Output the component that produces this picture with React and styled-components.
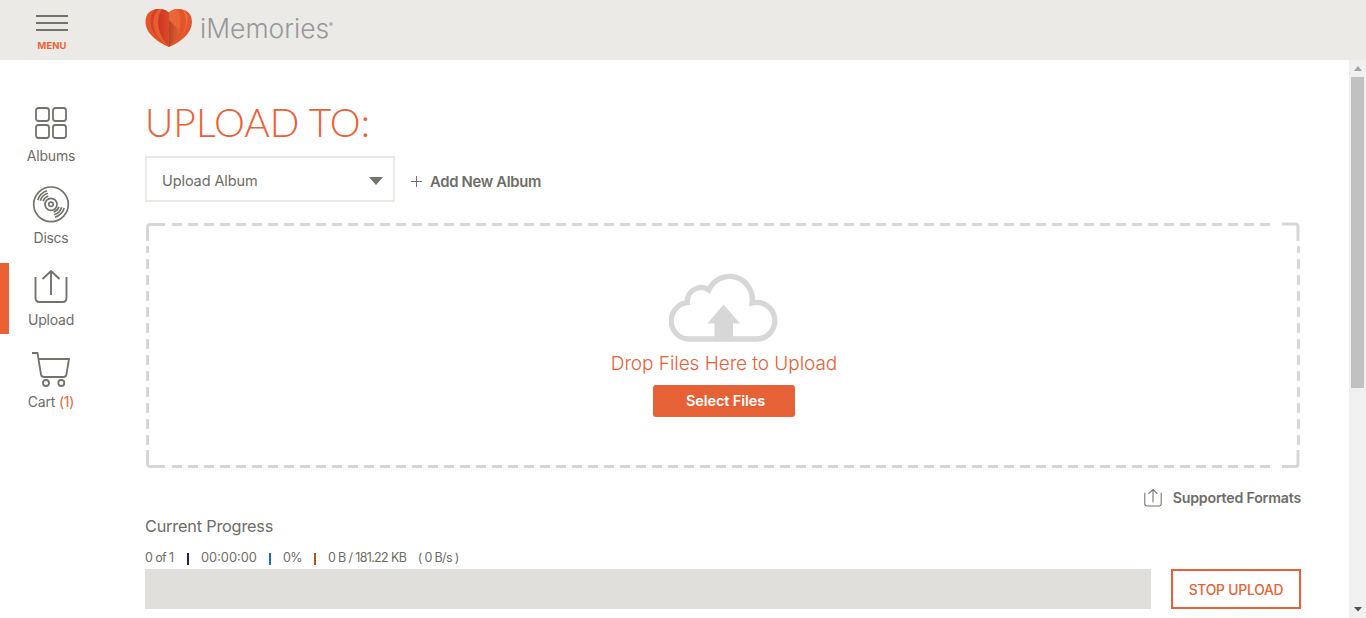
import React from 'react';
import styled, { createGlobalStyle } from 'styled-components';

const Global = createGlobalStyle`
  *{box-sizing:border-box}
  body{margin:0;background:#fff;font-family:Inter,"Liberation Sans",sans-serif;color:#6d6d66;overflow:hidden}
`;
const Page = styled.div`height:618px;display:flex;flex-direction:column;`;
const Header = styled.header`height:60px;flex:none;background:#ebeae6;display:flex;`;
const MenuButton = styled.div`
  width:104px;padding-top:15px;display:flex;flex-direction:column;align-items:center;gap:5px;
`;
const MenuBar = styled.span`width:32px;height:2px;background:#73736a;`;
const Line = styled.span`
  display:block;white-space:pre;
  font-family:${p => p.$family || 'Inter'},"Liberation Sans",sans-serif;
  font-size:${p => p.$size}px;line-height:${p => p.$lh || 20}px;
  font-weight:${p => p.$weight || 400};letter-spacing:${p => p.$ls || 0}px;
  color:${p => p.$color || 'inherit'};
`;
const MenuLabel = styled(Line)`margin-top:3px;`;
const Title = styled(Line)`margin:0;`;
const Count = styled.span`color:#eb6134;`;
const Logo = styled.div`margin-left:41px;display:flex;align-items:flex-start;padding-top:8px;gap:7px;`;
const Wordmark = styled(Line)`padding-top:1px;`;
const Dot = styled.span`width:4px;height:4px;border-radius:2px;background:#b5b6b6;margin:14px 0 0 -7px;`;
const Body = styled.div`flex:1;display:flex;min-height:0;`;
const Nav = styled.nav`width:145px;flex:none;padding-top:39px;`;
const NavItem = styled.a`
  height:71px;margin-bottom:11px;width:102px;display:flex;flex-direction:column;align-items:center;
  border-left:${p => (p.$active ? '9px solid #eb6134' : '0')};
  padding-right:${p => (p.$active ? '9px' : '0')};
`;
const IconSlot = styled.span`height:47px;display:flex;align-items:center;`;
const Main = styled.main`width:1156px;flex:none;padding-top:40px;`;
const AlbumRow = styled.div`display:flex;margin-top:11px;align-items:center;`;
const Select = styled.div`
  width:250px;height:46px;border:2px solid #e9e9e4;padding:4px 10px 0 15px;display:flex;align-items:center;justify-content:space-between;
`;
const AddAlbum = styled.div`display:flex;align-items:center;gap:8px;margin:5px 0 0 16px;`;
const DropZone = styled.section`
  display:grid;margin-top:20px;height:247px;
  & > *{grid-area:1/1}
`;
const DropBody = styled.div`display:flex;flex-direction:column;align-items:center;padding:51px 0 0 2px;`;
const DropText = styled(Line)`margin-top:9px;`;
const SelectFiles = styled.div`
  width:142px;height:32px;margin-top:9px;background:#e66236;border-radius:3px;display:flex;justify-content:center;align-items:center;padding-left:3px;
`;
const Formats = styled.div`display:flex;justify-content:flex-end;align-items:center;gap:11px;height:20px;margin-top:19px;`;
const SectionTitle = styled(Line)`margin-top:8px;`;
const Stats = styled.div`display:flex;margin-top:12px;height:20px;align-items:center;`;
const Stat = styled(Line)`width:${p => p.$w || 'auto'};`;
const Sep = styled.i`width:2px;height:12px;margin:1px 12px 0 0;background:${p => p.$c};`;
const ProgressRow = styled.div`display:flex;justify-content:space-between;margin-top:1px;`;
const Track = styled.div`width:1006px;height:40px;background:#e0dfdb;`;
const Stop = styled.div`width:130px;height:40px;border:2px solid #e66236;display:flex;align-items:center;justify-content:center;padding-top:1px;`;
const Scroll = styled.div`
  width:17px;margin-left:auto;background:#f0f0f0;display:flex;flex-direction:column;align-items:center;padding:6px 0 6px;
`;
const Thumb = styled.div`width:13px;height:311px;background:#c1c1c1;margin:6px 0 auto;`;

const stroke = { fill: 'none', stroke: '#73736a', strokeWidth: 2 };

const Heart = () => (
  <svg width="48" height="40" viewBox="0 0 48 40">
    <defs>
      <linearGradient id="dark"><stop offset="0" stopColor="#c93524" /><stop offset="1" stopColor="#dd4a28" /></linearGradient>
      <linearGradient id="fold"><stop offset="0" stopColor="#b8452a" /><stop offset="1" stopColor="#e8602f" /></linearGradient>
      <clipPath id="hc"><path d="M24 4.500C21 1.500 18 1 14 1C5 1 0.500 6 0.500 14C0.500 25 12 34 24 39C36 34 47 25 47 14C47 6 42 1 33 1C29 1 26 2 24 4.500Z" /></clipPath>
    </defs>
    <g clipPath="url(#hc)">
      <path fill="#e4552b" d="M0 0H48V40H0Z" />
      <path d="M11 0C1 9 4 28 24 39C9 28 6 12 15 0Z" fill="#cf4426" />
      <path d="M15 0C3 10 7 29 24 39V5Z" fill="#e85c2f" />
      <path d="M18 0C10 8 12 27 24 39V5Z" fill="url(#dark)" />
      <path d="M24 4V39C36 28 38 10 32 0Z" fill="#ec6534" />
      <path d="M24 12L35 23Q31 32 24 39Z" fill="url(#fold)" />
      <path d="M36 0C43 11 38 28 24 39C39 26 40 10 34 0Z" fill="#dc562c" />
      <path d="M39 0C48 12 40 29 24 39C43 27 44 11 37 0Z" fill="#ee6d3b" />
    </g>
  </svg>
);
const Albums = () => (
  <svg width="32" height="32" {...stroke} strokeWidth="1.8">
    {[[1, 1], [18, 1], [1, 18], [18, 18]].map(([x, y]) => <rect key={x + '-' + y} x={x} y={y} width="13" height="13" rx="2.5" />)}
  </svg>
);
const Disc = () => (
  <svg width="38" height="38" viewBox="0 0 38 38" {...stroke} strokeWidth="1.7">
    <circle cx="19" cy="18.300" r="17.3" /><circle cx="19" cy="18.300" r="6" /><circle cx="19" cy="18.300" r="2.2" />
    <path d="M5.800 14A14 14 0 0 1 15 4.800M8.300 14.800A11.200 11.200 0 0 1 15.800 7.300M11 15.300A8.500 8.500 0 0 1 16.300 10M32.200 22A14 14 0 0 1 23 31.200M29.700 21.200A11.200 11.200 0 0 1 22.200 28.700M27 20.700A8.500 8.500 0 0 1 21.700 26" />
  </svg>
);
const Share = ({ size = 34, w = 1.9 }) => (
  <svg width={size} height={size} viewBox="0 0 34 34" {...stroke} strokeWidth={w}>
    <path d="M1.500 7V28Q1.500 32 5.500 32H28.500Q32.500 32 32.500 28V7M17 25V1M8.500 9L17 1L25.500 9" />
  </svg>
);
const Cart = () => (
  <svg width="38" height="36" viewBox="0 0 38 36" {...stroke} strokeWidth="1.8">
    <path d="M0 2H5.500L9 23.500Q9.500 26 12 26H31.500Q34 26 34.400 23.500L37 8H6.500" />
    <circle cx="14" cy="32" r="3" /><circle cx="29.300" cy="32" r="3" />
  </svg>
);
const Cloud = () => (
  <svg width="110" height="70" viewBox="0 0 110 70">
    <path d="M20 66H89A18.300 18.300 0 1 0 84.500 30A23 23 0 0 0 40.800 17A13.800 13.800 0 0 0 19.300 29.700A18.200 18.200 0 0 0 20 66Z" fill="none" stroke="#d7d7d7" strokeWidth="5.3" transform="translate(-.6 0) scale(.99 1)" />
    <path d="M54.500 31.500L71 50.500H64V67H45.500V50.500H38.500Z" fill="#d7d7d7" />
  </svg>
);
const Frame = () => (
  <svg width="1156" height="247" fill="none" stroke="#d7d7d7" strokeWidth="3">
    <path d="M20 2.500H5Q2.500 2.500 2.500 5V19M20 244.500H5Q2.500 244.500 2.500 242V228M1137 2H1150.500Q1153 2 1153 4.500V19M1137 244.500H1150.500Q1153 244.500 1153 242V228" />
    <path strokeDasharray="10 6" d="M27 2.500H1127M27 244.500H1127" />
    <path strokeDasharray="7 6 10 6 10 6 10 6 10 6 10 6 10 6 10 6 10 6 10 6 10 6 10 6 10 100" d="M2.500 24V223M1153.500 24V223" />
  </svg>
);

export default function App() {
  return (
    <Page>
      <Global />
      <Header>
        <MenuButton><MenuBar /><MenuBar /><MenuBar /><MenuLabel $size={9.4} $ls={0.1} $weight={700} $color="#eb6134" $lh={14}>MENU</MenuLabel></MenuButton>
        <Logo><Heart /><Wordmark $size={26.500} $weight={300} $lh={38} $color="#96989b">iMemories</Wordmark><Dot /></Logo>
      </Header>
      <Body>
        <Nav>
          <NavItem><IconSlot><Albums /></IconSlot><Line $size={14} $ls={-0.2}>Albums</Line></NavItem>
          <NavItem><IconSlot><Disc /></IconSlot><Line $size={14} $ls={-0.3}>Discs</Line></NavItem>
          <NavItem $active><IconSlot><Share /></IconSlot><Line $size={14} $ls={-0.2}>Upload</Line></NavItem>
          <NavItem><IconSlot><Cart /></IconSlot><Line $size={14} $ls={-0.2}>Cart <Count>(1)</Count></Line></NavItem>
        </Nav>
        <Main>
          <Title as="h1" $family="Lato" $size={39} $weight={300} $lh={45} $color="#eb6134">UPLOAD TO:</Title>
          <AlbumRow>
            <Select><Line $size={14.500} $ls={-0.1}>Upload Album</Line><svg width="14" height="8"><path d="M0 0H14L7 8Z" fill="#73736a" /></svg></Select>
            <AddAlbum><svg width="11" height="11"><path d="M5.500 0V11M0 5.500H11" stroke="#73736a" /></svg><Line $size={14.800} $ls={-0.3} $weight={600}>Add New Album</Line></AddAlbum>
          </AlbumRow>
          <DropZone>
            <Frame />
            <DropBody><Cloud /><DropText $size={19} $weight={300} $lh={24} $ls={-0.050} $color="#e66236">Drop Files Here to Upload</DropText>
              <SelectFiles><Line $size={14.500} $ls={-0.1} $weight={600} $color="#fff">Select Files</Line></SelectFiles></DropBody>
          </DropZone>
          <Formats><Share size={18} w={2} /><Line $size={14.200} $ls={-0.2} $weight={600}>Supported Formats</Line></Formats>
          <SectionTitle $size={16.300} $ls={-0.2}>Current Progress</SectionTitle>
          <Stats>
            <Stat $w="42px" $size={12.500} $ls={-0.6}>0 of 1</Stat><Sep $c="#302040" /><Stat $w="68px" $size={12.800}>00:00:00</Stat><Sep $c="#1670b0" /><Stat $w="31px" $size={12.500} $ls={-0.6}>0%</Stat><Sep $c="#a85a10" /><Stat $size={12.500} $ls={-0.650}>0 B / 181.22 KB    ( 0 B/s )</Stat>
          </Stats>
          <ProgressRow><Track /><Stop><Line $size={13.800} $ls={-0.2} $weight={500} $color="#e66236">STOP UPLOAD</Line></Stop></ProgressRow>
        </Main>
        <Scroll>
          <svg width="8" height="5"><path d="M0 5L4 0L8 5Z" fill="#a3a3a3" /></svg><Thumb /><svg width="8" height="5"><path d="M0 0H8L4 4.500Z" fill="#505050" /></svg>
        </Scroll>
      </Body>
    </Page>
  );
}
